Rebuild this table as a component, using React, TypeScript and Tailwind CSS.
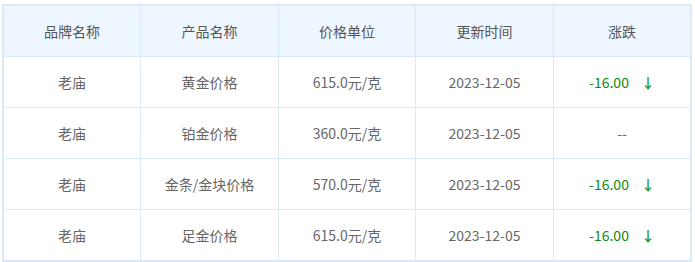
import React from 'react';

const headers = ['品牌名称', '产品名称', '价格单位', '更新时间', '涨跌'];

const rows = [
    { brand: '老庙', product: '黄金价格', price: '615.0元/克', date: '2023-12-05', change: '-16.00' },
    { brand: '老庙', product: '铂金价格', price: '360.0元/克', date: '2023-12-05', change: '' },
    { brand: '老庙', product: '金条/金块价格', price: '570.0元/克', date: '2023-12-05', change: '-16.00' },
    { brand: '老庙', product: '足金价格', price: '615.0元/克', date: '2023-12-05', change: '-16.00' },
];

const font = { fontFamily: '"Microsoft YaHei", "Noto Sans CJK SC", sans-serif' };

const Cell: React.FC<{ last?: boolean; head?: boolean; children: React.ReactNode }> = ({ last, head, children }) => (
    <div
        className={`flex items-center justify-center h-[50px] text-[14px] ${head ? 'text-[#555]' : 'text-[#666]'} ${last ? '' : 'border-r border-[#dce9f9]'}`}
    >
        {children}
    </div>
);

export default function App() {
    return (
        <div className="w-[695px] h-[262px] bg-white pt-[4px] pl-[2px]" style={font}>
            <div className="w-[690px] border-2 border-[#dce9f9]">
                <div className="grid grid-cols-[137px_138px_137px_138px_136px] bg-[#eef6ff] border-b border-[#dce9f9]">
                    {headers.map((h, i) => (
                        <Cell key={h} head last={i === headers.length - 1}>{h}</Cell>
                    ))}
                </div>
                {rows.map((r, i) => (
                    <div
                        key={i}
                        className={`grid grid-cols-[137px_138px_137px_138px_136px] ${i < rows.length - 1 ? 'border-b border-[#dce9f9]' : ''}`}
                    >
                        <Cell>{r.brand}</Cell>
                        <Cell>{r.product}</Cell>
                        <Cell>{r.price}</Cell>
                        <Cell>{r.date}</Cell>
                        <Cell last>
                            {r.change ? (
                                <span className="flex items-center">
                                    <span className="text-[#0d8a0d]">{r.change}</span>
                                    <span className="ml-[12px] text-[#2e9c2e] font-bold">↓</span>
                                </span>
                            ) : (
                                <span>--</span>
                            )}
                        </Cell>
                    </div>
                ))}
            </div>
        </div>
    );
}
